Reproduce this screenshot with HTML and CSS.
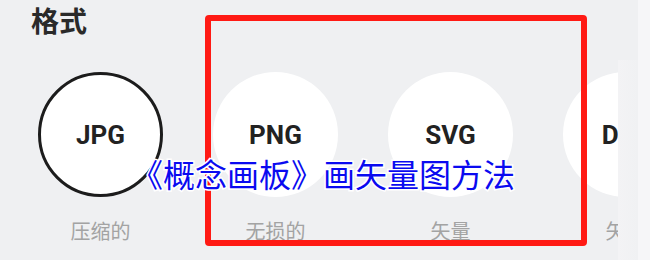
FILE: index.html
```html
<!DOCTYPE html>
<html lang="zh">
<head>
<meta charset="utf-8">
<link rel="stylesheet" href="styles.css">
</head>
<body>
<div class="page">
  <h2 class="heading">格式</h2>
  <div class="row">
    <div class="item">
      <div class="circle selected">JPG</div>
      <div class="label">压缩的</div>
    </div>
    <div class="item">
      <div class="circle">PNG</div>
      <div class="label">无损的</div>
    </div>
    <div class="item">
      <div class="circle">SVG</div>
      <div class="label">矢量</div>
    </div>
    <div class="item">
      <div class="circle">DXF</div>
      <div class="label">矢量</div>
    </div>
  </div>
  <div class="fade"></div>
  <div class="edge"></div>
  <div class="highlight"></div>
  <div class="title">《概念画板》画矢量图方法</div>
</div>
</body>
</html>
```
FILE: styles.css
```css
html, body {
  margin: 0;
  padding: 0;
  background: #eff0f2;
}
.page {
  position: relative;
  width: 650px;
  height: 260px;
  overflow: hidden;
  font-family: "Noto Sans CJK SC", "Noto Sans", sans-serif;
}
.heading {
  margin: 0;
  padding: 0 0 0 31px;
  font-size: 28px;
  line-height: 40px;
  font-weight: 700;
  color: #2a2a2a;
}
.row {
  display: flex;
  gap: 50px;
  margin-top: 32px;
  padding-left: 38px;
}
.item {
  flex: 0 0 125px;
  display: flex;
  flex-direction: column;
  align-items: center;
}
.circle {
  box-sizing: border-box;
  width: 125px;
  height: 125px;
  border-radius: 50%;
  background: #ffffff;
  display: flex;
  align-items: center;
  justify-content: center;
  font-family: Roboto, "Liberation Sans", sans-serif;
  font-weight: 700;
  font-size: 26px;
  color: #222222;
}
.circle.selected {
  border: 3px solid #1c1c1c;
}
.label {
  margin-top: 22px;
  font-size: 20px;
  line-height: 24px;
  color: #a3a3a3;
}
.fade {
  position: absolute;
  left: 618px;
  top: 60px;
  width: 20px;
  height: 200px;
  background: linear-gradient(to right, #f3f3f5, #f0f1f3);
}
.edge {
  position: absolute;
  left: 638px;
  top: 0;
  width: 12px;
  height: 260px;
  background: #f6f6f8;
}
.highlight {
  position: absolute;
  left: 205px;
  top: 15px;
  width: 370px;
  height: 219px;
  border: 6px solid #ff1a14;
  border-radius: 4px;
}
.title {
  position: absolute;
  left: 131px;
  top: 153px;
  font-size: 32px;
  line-height: 40px;
  color: #0a0af0;
  -webkit-text-stroke: 3px #ffffff;
  paint-order: stroke fill;
  white-space: nowrap;
}
```
